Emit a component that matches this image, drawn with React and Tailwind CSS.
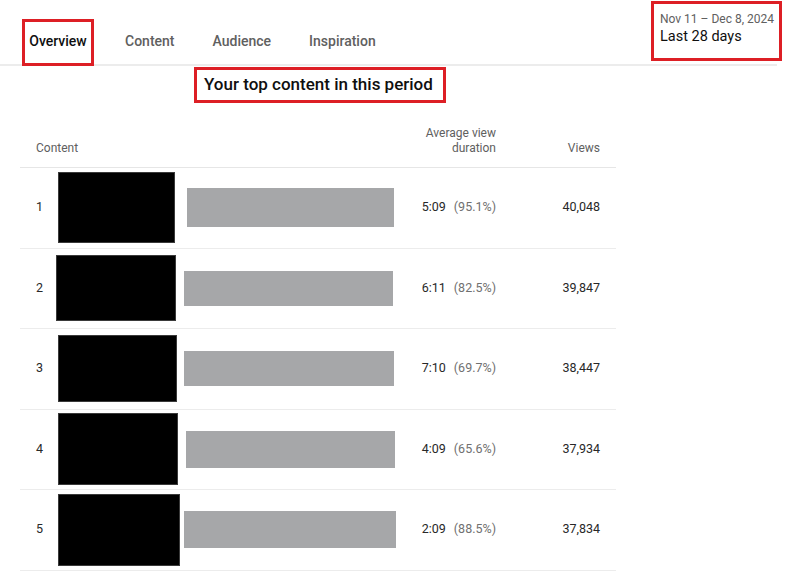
import React from 'react';

const rows = [
    { n: 1, dur: '5:09', pct: '(95.1%)', views: '40,048', thumb: { ml: 0, w: 117, h: 71 }, bar: { ml: 12, w: 207, h: 39 } },
    { n: 2, dur: '6:11', pct: '(82.5%)', views: '39,847', thumb: { ml: -2, w: 120, h: 66 }, bar: { ml: 8, w: 209, h: 35 } },
    { n: 3, dur: '7:10', pct: '(69.7%)', views: '38,447', thumb: { ml: 0, w: 119, h: 67 }, bar: { ml: 7, w: 210, h: 35 } },
    { n: 4, dur: '4:09', pct: '(65.6%)', views: '37,934', thumb: { ml: 0, w: 120, h: 72 }, bar: { ml: 8, w: 209, h: 37 } },
    { n: 5, dur: '2:09', pct: '(88.5%)', views: '37,834', thumb: { ml: 0, w: 122, h: 72 }, bar: { ml: 4, w: 212, h: 37 } },
];

const App = () => {
    return (
        <div className="w-[795px] h-[575px] bg-white overflow-hidden text-[#0f0f0f]" style={{ fontFamily: 'Roboto, "Liberation Sans", sans-serif' }}>
            {/* Tabs + date range */}
            <div className="w-[777px] h-[66px] border-b-2 border-[#ececec] flex items-start justify-between">
                <div className="flex items-center pl-[22px] pt-[19px]">
                    <div className="w-[72px] h-[47px] border-[3px] border-[#dd1f25] flex items-center justify-center pb-[2px] text-[14px] font-medium text-[#0f0f0f]">
                        Overview
                    </div>
                    <div className="flex items-center gap-[38px] ml-[31px] pb-[2px] text-[14px] font-medium text-[#606060]">
                        <span>Content</span>
                        <span>Audience</span>
                        <span>Inspiration</span>
                    </div>
                </div>
                <div className="mt-[1px] -mr-[5px] w-[131px] h-[60px] border-[3px] border-[#dd1f25] pl-[6px] pt-[7px]">
                    <div className="text-[12px] leading-[16px] text-[#606060] whitespace-nowrap">Nov 11 – Dec 8, 2024</div>
                    <div className="text-[14.5px] leading-[20px] text-[#0f0f0f]">Last 28 days</div>
                </div>
            </div>

            {/* Section title */}
            <div className="ml-[194px] mt-[1px] w-[252px] h-[36px] border-[3px] border-[#dd1f25] flex items-center pl-[7px]">
                <span className="text-[17px] font-medium text-[#0f0f0f] whitespace-nowrap">Your top content in this period</span>
            </div>

            {/* Table */}
            <div className="ml-[20px] w-[596px]">
                <div className="h-[65px] border-b border-[#e6e6e6] flex items-end pb-[11px] text-[12px] leading-[15px] text-[#606060]">
                    <div className="pl-[16px] flex-1">Content</div>
                    <div className="w-[100px] text-right">Average view<br />duration</div>
                    <div className="w-[120px] text-right pr-[16px]">Views</div>
                </div>

                {rows.map(row => (
                    <div key={row.n} className="h-[80.5px] border-b border-[#ececec] flex items-center text-[12.5px]">
                        <div className="w-[38px] pl-[16px] text-[#282828]">{row.n}</div>
                        <div
                            className="bg-black border border-[#3a3a3a] flex-shrink-0"
                            style={{ marginLeft: row.thumb.ml, width: row.thumb.w, height: row.thumb.h }}
                        ></div>
                        <div
                            className="bg-[#a6a7a9] flex-shrink-0"
                            style={{ marginLeft: row.bar.ml, width: row.bar.w, height: row.bar.h }}
                        ></div>
                        <div className="flex-1 flex justify-end gap-[8px]">
                            <span className="text-[#282828]">{row.dur}</span>
                            <span className="text-[#707070]">{row.pct}</span>
                        </div>
                        <div className="w-[120px] text-right pr-[16px] text-[#282828]">{row.views}</div>
                    </div>
                ))}
            </div>
        </div>
    );
};

export default App;
